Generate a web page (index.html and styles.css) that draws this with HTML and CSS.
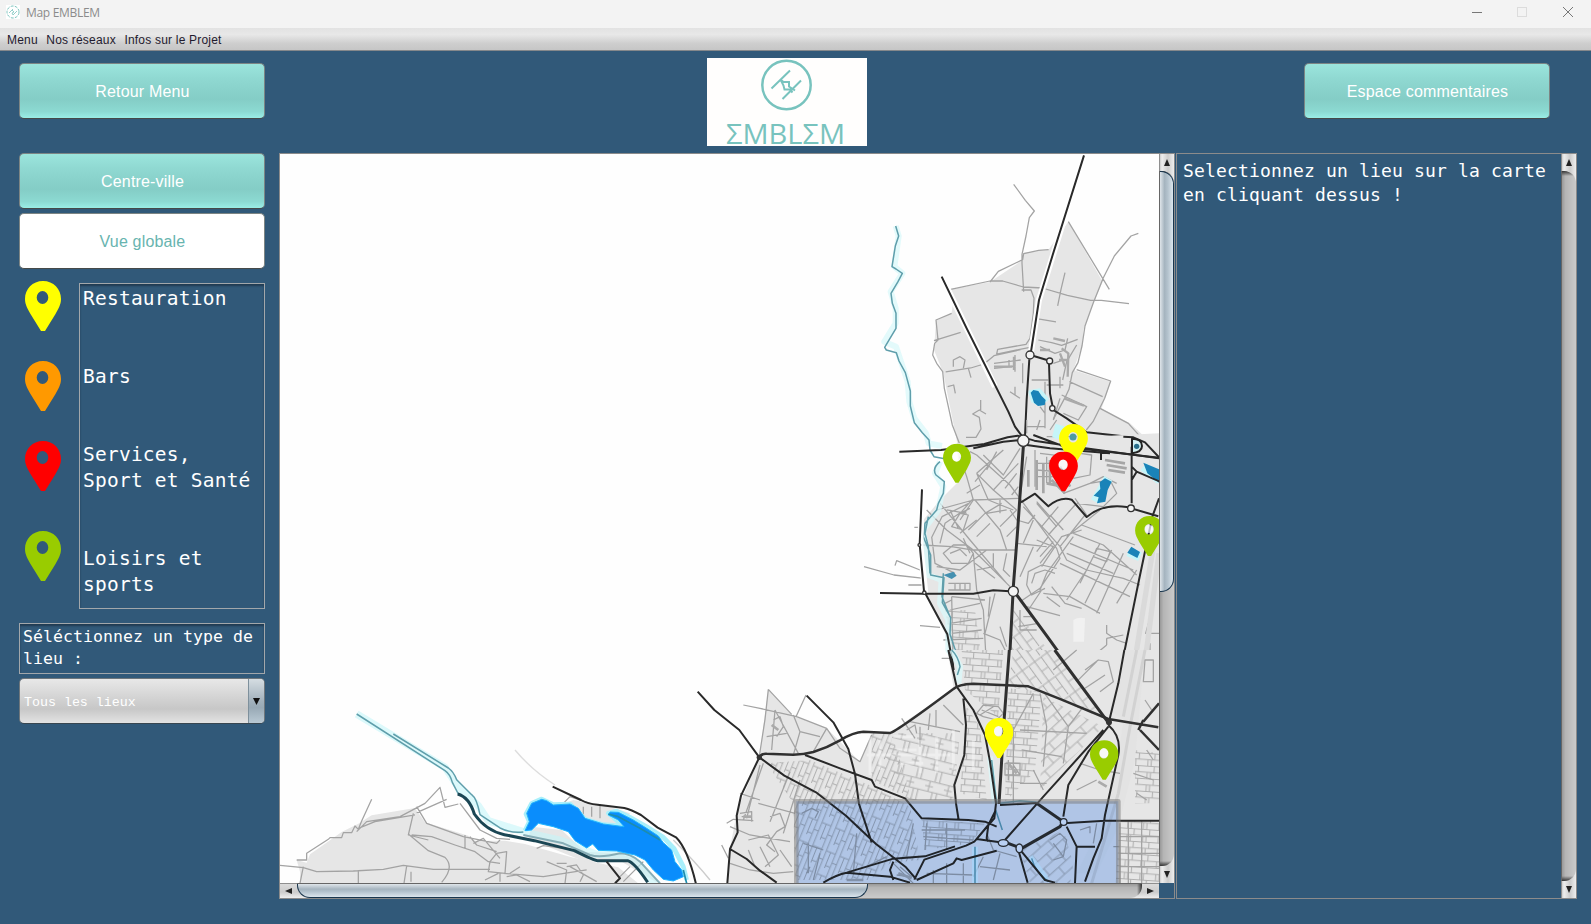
FILE: index.html
```html
<!DOCTYPE html>
<html lang="fr">
<head>
<meta charset="utf-8">
<title>Map EMBLEM</title>
<link rel="stylesheet" href="styles.css">
</head>
<body>
<svg class="defs" width="0" height="0" aria-hidden="true">
  <symbol id="pin" viewBox="0 0 36 50"><path fill-rule="evenodd" d="M18 0C7.500 0 0 8 0 18c0 6 3 10 5.500 15L16 50h4l10.500-17C33 28 36 24 36 18 36 8 28.500 0 18 0zM17.500 10a5.800 6.500 0 1 1 0 13a5.800 6.500 0 1 1 0-13z"/></symbol>
</svg>
<header class="titlebar">
  <svg class="app-icon" viewBox="0 0 14 14"><rect width="14" height="14" fill="#fff"/><circle cx="7" cy="7" r="6" fill="none" stroke="#7cc4be" stroke-dasharray="3 1.200"/><path d="M3 8l4-4M7 10l4-4M6 5l2 2-2 1 1 2" fill="none" stroke="#7cc4be" stroke-width=".8"/></svg>
  <span class="title">Map EMBLEM</span>
  <svg class="controls" width="102" height="12" viewBox="0 0 102 12" fill="none"><path d="M0 6.500h10" stroke="#777"/><rect x="45.500" y="1.500" width="9" height="9" stroke="#dcdcdc"/><path d="M91 1l10 10M101 1L91 11" stroke="#777"/></svg>
</header>
<nav class="menubar"><span>Menu</span><span>Nos réseaux</span><span>Infos sur le Projet</span></nav>
<main class="content">
  <div class="top">
    <button class="btn">Retour Menu</button>
    <svg class="logo" width="160" height="88" viewBox="0 0 160 88" role="img" aria-label="EMBLEM">
      <rect width="160" height="88" fill="#fffefd"/>
      <g fill="none" stroke="#78c3be" stroke-width="2.500"><circle cx="79.500" cy="27" r="24.200"/><path stroke-width="2" d="M64.500 30.500L83 12.500M75.500 41l18.500-18.500M73.500 21.500l3 2.500h5.500v4.500l6 4M73.500 21.500l3 6 1 4h5.500l2.500 3"/></g>
      <text x="19" y="85.500" textLength="119" lengthAdjust="spacingAndGlyphs" class="wordmark">ΣMBLΣM</text>
    </svg>
    <button class="btn">Espace commentaires</button>
  </div>
  <div class="columns">
    <aside class="side">
      <button class="btn">Centre-ville</button>
      <button class="btn selected">Vue globale</button>
      <div class="legend">
        <div class="pins">
          <svg fill="#ff0"><use href="#pin"/></svg><svg fill="#f90"><use href="#pin"/></svg><svg fill="red"><use href="#pin"/></svg><svg fill="#9c0"><use href="#pin"/></svg>
        </div>
        <pre class="legend-text">Restauration


Bars


Services,
Sport et Santé


Loisirs et
sports</pre>
      </div>
      <pre class="prompt">Séléctionnez un type de
lieu :</pre>
      <div class="combo"><span class="value">Tous les lieux</span><span class="drop"><svg width="7" height="7"><path d="M0 0h7L3.500 7z" fill="#111"/></svg></span></div>
    </aside>
    <section class="map-pane">
      <svg class="map" viewBox="280 154 879 729" fill="none" stroke-linejoin="round">
        <defs>
          <pattern id="g1" width="47" height="38" patternUnits="userSpaceOnUse" patternTransform="rotate(4)"><path d="M0 2h47M14 2v20M0 22h47M34 22v16M34 0v2M24 2v20" class="grid"/></pattern>
          <pattern id="g2" width="74" height="44" patternUnits="userSpaceOnUse" patternTransform="rotate(-68)"><path d="M0 2h74M0 17h74M0 31h50M22 2v15M50 17v27M50 0v2M8 31v13" class="grid"/></pattern>
          <pattern id="g3" width="66" height="54" patternUnits="userSpaceOnUse" patternTransform="rotate(-42)"><path d="M0 2h66M12 2v28M0 30h66M42 30v24M42 0v2" class="grid"/></pattern>
          <pattern id="g4" width="58" height="66" patternUnits="userSpaceOnUse" patternTransform="rotate(14)"><path d="M0 2h58M0 34h58M0 18h24M12 2v32M40 34v32M40 0v2M26 34v32" class="grid"/></pattern>
          <pattern id="g5" width="46" height="72" patternUnits="userSpaceOnUse" patternTransform="rotate(-36)"><path d="M0 6h46M12 0v72M36 6v66M12 42h24" class="grid"/></pattern>
        </defs>
        <rect x="280" y="154" width="879" height="729" fill="#fefefe"/>

        <!-- northern land -->
        <g transform="translate(860 150) scale(.33333)">
          <path class="land" d="M272 418L390 396 488 330 492 308 565 300 625 215 728 395 700 460 670 540 668 585 640 660 752 695 725 775 810 820 897 900V1100H330L290 870 250 670 222 600 228 512 275 490 280 450z"/>
          <path class="water-halo" d="M107 228l9 30-13 92 24 20-35 55 15 50v45l-34 55 35 15 20 60 15 45 5 60 15 50 35 45 8 30 40 8"/>
          <path class="river" d="M107 228l9 30-10 30-10 62 12 7 19 13-13 25-21 35 4 30 11 30v45l-18 30-16 27 5 8 30 8 8 25 19 35 15 55v45l12 50 24 30 20 22 3 30 12 20 40 8"/>
          <g class="st">
            <path d="M461 103l35 48 27 32-15 20-10 55-12 55v27l5 85M272 418l118-25h38l62 18 57 3 75 22 70 15h32l83 10M390 396l25-32 73-35 3-18 45-10 30-2M625 215l123 203M835 250l-22 8-50 60-33 65-30 75-25 70-9 60-12 50-17 30-10 50-12 25-35 65M615 368l-12 50-10 50M485 420h28l9 25-2 45-10 75-12 18-85 15-3 14 100-20M530 506l58 10M275 490l-47 20 6 60-10 10-6 35 12 25 18 25 5 50 12 55 12 55 25 65M222 572l80-25M257 666l75-12 40-12 30-25 80-18M650 659l102 34-18 52-35 70-20 25M628 695l100 45M720 775l85 45 70 78M318 862l30 0 15-25-5-35-20-10 20-12 20 12M362 750v30"/>
            <path d="M535 570l40 8 30 8 48-18M540 590l45 20 30-10 8-35M650 585l-30 50-12 55M580 640l30-10M402 640l80-10M402 655l65-7M447 630v20M465 615v50M488 640v60M515 690h50M560 705h50M600 680v35M465 710v25M450 725l30 20M555 695v140M500 830h55M540 770l15 20M605 735l75 35-25 40-45-20M600 745l-20 65M280 650v-20l20-10 15 10-5 25M263 710l18-5 5 25M325 655l8 28M590 810l-20 30M560 860h90M690 870h125M690 880h125"/>
          </g>
          <g stroke="#aaa" stroke-width="7"><path d="M402 650h55M605 595l20 15-2 70M600 610l15 40M580 565l35 8M612 745l60 22M462 620v40M540 600h30M597 630h25"/></g>
          <path class="halo" d="M540 762l-20-10-8-25 25-5 22 25zM600 835l-10 35M830 870v25" stroke-width="14"/>
          <path class="lake" d="M512 728l8-8 15 3 10 15 12 12-3 15-20 3-12-10z"/>
          <path class="casing" d="M672 16L537 450 513 605M245 380l160 330"/>
          <path class="road" d="M672 16L578 315 537 450 513 605M508 628l-8 120-5 110M245 380l75 155 125 250 20 45 22 30M521 618l40 12M567 640l3 90 10 50 40 25 60 42 110 12 30 2"/>
          <g class="node"><circle cx="510" cy="615" r="12"/><circle cx="569" cy="633" r="9"/><circle cx="577" cy="775" r="8"/></g>
        </g>

        <!-- centre -->
        <g transform="translate(860 420) scale(.33333)">
          <path class="land" d="M290 70l607-30V830H285l-30-190-60-120-15-110 10-110 50-60 60-60z"/>
          <path fill="url(#g1)" d="M255 570l90 0 25 180H285z"/>
          <path fill="url(#g5)" d="M460 560l70 90 90 100H450z"/>
          <g class="st">
            <path d="M330 95l20 10 100 90 140 190 10 30-60 90-60 40M350 160l80-70M350 160l50 50 75-80M350 160l35 80 75 30M300 110l20 60 20 70-40 60M230 270l110-30 140-5M240 250l90 110 110 130M200 270l60 60 80 60 110 110M185 375l90 5 60 10h130M345 240l75 90 20 60M380 280l60-10M325 330l50-50 50-30M340 400l10 110 20 60 10 180M405 520l-30 120M275 530l100 10M490 260l75 80 40 45M600 380l75-95M600 380l20 40 60 30 110 25 50 20M620 350l100-80M565 345l80-90M470 370l90 10M480 470l40-90M240 370l15-60 50-35 35-40M250 400l30-25 40 0 20 25-15 30-50 0zM270 400l30-12 20 20M230 440l70 10 80-60M216 350l30-60 80-40M215 350l10 80 60 30M260 270l60 10M270 270l25 55M300 280l30-15M275 320l25-40 25 5-15 45zM450 270l20 30 35 10 20-25M500 495l5-40 40-20 45 10M515 490l10-30 30-10 30 10M500 495l15 30 40-20M545 510l-40 60M550 520l80 10 90 50M575 500l40 50 50 15M545 440l60-90 60-20M530 360l50 20-40 50M530 395l35-45M540 410l40-45M640 350l-80 110-20 50M640 340l90 35 100 90M665 315l160 60M630 370l190 80M620 400l140 60M600 430l210 100M680 450l-60 90M720 370l-60 120M755 390l-80 160M790 400l-80 180M830 450l-60 100M700 410l10-25 40 10-10 30z"/>
            <path d="M645 235l35 50M500 110l-20 120M525 90v110M540 100l80 10M530 130h60M530 150l60 5M530 170h60M560 110v80M590 120v80M640 175l50-10 5-60-35-5M610 220l80-30 60-10 20 40-40 40-80-10M690 190l40-20 40 20M600 560l-40-30M500 560l100 27M770 660l-30-20v-25M740 655l50-10M740 655v20M740 675l-30 25-60 20M770 660l30 10M480 570v60h50M475 620l60-10M490 590h30M420 620l20 60M370 640l50 20 20 40M275 530l5 220M255 550l20-10M265 490h65v20h-65M285 490v20M300 490v20M315 490v20M12 440l90 25 90 10M180 450l-70-28-5 15M145 495h45M180 617l60 5M245 715h30M250 660l120-5M270 570l90-20M270 610l95-15M275 640l90-10M163 322h25M390 530l-5 60M700 740l20-35 20 35M500 0v40M540 0l-10 30M897 640h-40l25-90M870 720v-50M885 720l-5 30"/>
            <path d="M370 105l60 60 50-80M380 150l30-55M345 185l50-60M400 210l70 60M420 240v40M435 205l35-45M455 225l20-25M360 195l-40 25M420 320l50-50M440 350l30-30M350 350l40-40M300 340l50-40M310 355l20 45M345 430l60 45M400 400v40l-50 10M440 400l-10 50 20 20M520 300l-30 70M545 320l50-60M590 320l-60-70M570 290l-40-45M610 330l-40-45"/>
          </g>
          <g stroke="#a6a6a6" stroke-width="8"><path d="M530 120v90M550 130v90M735 120l60 10M740 135l60 10M745 150l50 8M575 180l40 40M505 150v50M560 190l50 10M570 120v70M600 140l30 60"/></g>
          <g stroke="#dadada" stroke-width="16"><path d="M897 400l-45 350M880 380l-60 370"/></g>
          <path d="M640 600q15-10 35-5l-3 70h-32z" fill="#f1f1f1"/>
          <path class="water-halo" d="M240 125l-15 35 25 40-15 70-45 60 15 135 40 15-5 70 25 50v90l35 50"/>
          <path class="river" d="M240 125q-25 20-12 40l25 20-3 35-15 30-5 20-35 40-5 40 22 55v60l40 8-5 75 25 45-2 50 20 60 12 47M205 290l-10 50 10 40 5 80M250 460l-4 70 24 60"/>
          <path d="M250 465l30-10 10 12-15 10z" fill="#4490b0"/>
          <path class="halo" d="M745 175l-40 70M600 15l-10 40M805 395l35 15M850 140l50 40" stroke-width="28"/>
          <path class="lake" d="M735 175l20 10-12 25-7 35-25 5 5-18-15-5 20-20-2-20zM850 128l47 20v40l-35-28zM802 398l12-18 26 16-8 18z"/>
          <path class="casing" d="M60 519l130 0 M186 210l-5 165 15 145"/>
          <path class="road" d="M118 95l125-5 130-18 70-20 30-5 50 15 120 18 254 35M340 85l90-20 55-5M520 45l120 45M500 75l70 10 180 15M186 208l-7 165 13 140 70 130 20 107M60 519l130 2h150l60-10 50 3M483 247l42-26 40 38q35-30 70-20l45 52q45-40 120-30l95 28M815 80v170M815 140l15 15-15 25M830 155l70 30M790 50l30 2 35 15 42 45M723 100v20M897 235l-20 55-40 190-55 270"/>
          <path class="avenue" d="M490 80l-17 250-13 170-13 250M468 522l94 128 72 100"/>
          <path class="road" d="M640 83l257 30" stroke-width="10"/>
          <path d="M816 100V56q30 0 30 22 0 18-30 22z" fill="#d4f2f4" stroke="#222" stroke-width="6"/>
          <circle cx="830" cy="79" r="8" fill="#28708c"/>
          <g class="node"><circle cx="490" cy="62" r="17"/><circle cx="460" cy="514" r="15"/><circle cx="813" cy="265" r="10"/><circle cx="178" cy="375" r="4"/><circle cx="193" cy="518" r="5"/></g>
        </g>

        <!-- southern districts -->
        <g transform="translate(680 650) scale(.33333)">
          <path class="land" d="M818 0H1437V700H145L150 595 172 480 238 322 265 118 335 195 440 235 540 335 575 250 635 250 690 205 830 115z"/>
          <path fill="url(#g4)" d="M640 250h200l-20 200-140 0-60-130z"/>
          <path fill="url(#g2)" d="M260 340l130-10 190 80 110 60 30 160-90 10-60 50H345l-5-230zM575 250l60 0 60 200-120-60z"/>
          <path fill="url(#g1)" d="M845 0h125l-15 200-100-80zM860 170l40 60 20 220-80-20zM725 510l190 10-40 60-140 20z"/>
          <path fill="url(#g5)" d="M1000 0h120l160 210-190-80-105-20z"/>
          <path fill="url(#g1)" d="M985 115l100 10-20 240-90 90zM1320 510h117v190h-130zM1365 300l72 10v150h-72z"/>
          <path fill="url(#g3)" d="M1020 600l130-60 30 100-10 60h-120zM1090 140l180 90-190 190z"/>
          <path d="M1335 0h60l-30 330-50 200-65 140h-60l90-180 30-130 20-150-40-30z" fill="#e3e3e3"/>
          <path d="M1395 0l-45 230-35 200-80 270M1370 0l-40 200" stroke="#d2d2d2" stroke-width="9"/>
          <g class="st">
            <path d="M190 165l50 10 110 25 90 35 40 60 60 40 35-80M265 118l70 75M378 135l-30 65M265 118l-10 90-17 110M285 180l-10 120M280 210l20-10 10 30-20 30M285 180l70 130M260 260l60-10M340 195l20 50-20 70M360 245l60 15M440 235l-40 70M665 205l40 60M680 240l25-15 5 25M720 230v60M750 190l-5 50M768 180v50M790 165l60 60M690 215l150 30M240 345l-40 160M180 430l60 20M180 490l35-5v30M185 500h30M140 520l20-12 60 4M150 530l60 25 120 20M150 640l60 20 70 10 60-5M250 340l-60 170M330 365l-60 150M360 390l-50 160M235 460l110 30M270 500l30-10 15 40-25 15-30 40 25 20M205 570l60-15 30 60-40 35M205 600l20 50M240 590l30 60M300 600l35 50M145 625l-20-40M890 190l20-25 45 5 15 20-20 20-40-10zM905 180l50 20M900 195l40-25"/>
            <path d="M1215 60l40-30 30 5 15 60-40 30M1120 60l70-60M1190 95l60-60M1215 115l60-40M1090 125l75 105M1165 230l45-60M1165 230l-15 110M1080 130l20 100-10 120M1020 240l200 10M1060 130l-60 110M1000 230v230M1025 300l120 20M975 340h45v35h-45zM985 330v60M1000 345l20 30M1060 360l30 60M1020 400h80M1200 340l60 20 60 10M1190 420l60-30M1420 30h-25l-5 65h30zM1395 150l20 30M1360 370l60 20M1370 430l30 20M1400 300l20 30"/>
            <path d="M365 490l30-15 20 10-10 20M385 580v90M390 650l-10 20M370 580l60 20M420 610l-20 80M530 550l-10 120M560 650l60-30M640 640l60 60M660 650l35 30M650 675l40 5M700 520l-20 100M740 520l-5 80M800 520v80M730 560l150 10M725 540h130M920 550l20 50 70 20M910 620l-30 60M960 610l-20 80M760 660v40M800 640v60M850 640v60M740 670l140 5M900 650l90 10M1110 570l30-20 20 20-10 50-30 10M1120 580l30 40M1200 540l30-10v20M1250 520l-10 60M1320 520v180M1345 510v190M1385 510v190M1320 560h117M1320 610h117M1320 650h117M1300 590h20"/>
          </g>
          <g stroke="#aaa" stroke-width="8"><path d="M190 500h25M985 340l25 30M1255 395l25 15M275 225l20 15M500 690h50M655 670l40 15"/></g>
          <path class="water-halo" d="M815 0l25 50-5 50M930 320l15 140M885 590v110M1050 620l50 70"/>
          <path class="river" d="M815 0q20 20 25 50l-8 25M935 330l15 130M947 480l20 60M885 590v110M1055 625q10 40 50 70M960 460l60-8 50 5"/>
          <g stroke="#fff" stroke-opacity=".35" stroke-width="9"><path d="M570 260v115M600 270v90M640 260h60M650 300h60M660 340h70M720 270v100M770 260v110M820 240v120M880 270v90M560 315h250"/></g>
          <path class="road" d="M53 125l50 55 75 60 60 82 75 55 95 50 90 70 90 85 90 70 30 35M380 137l80 80 45 80 20 75 12 90 38 115M238 322l-55 115-13 60 3 50-23 50-8 103M150 597l50 30 40 35 50 36M375 315l105 40 95 35 10 20 90 35 50 60 140 5 50 5 35 15M805 0l25 110 50 70 35 75 15 80 18 125-5 45-60 70-25 12-125 42-30 60M850 145l8 80-5 90-30 90 5 55 8 50M430 698q40-25 70-30l140-42 95-7 90-30M640 635l-10 25 10 30M710 690l110-50 10-15 15 5 105-28M500 668l130 12 60 18M1333 0l-18 100-28 115M1285 230l-60 75-60 100-15 95M1285 225q40 35 30 90l-40 180-10 70-25 60-25 70M1270 240l-180 200-115 130M1150 520l125-8h162M1160 530l30 60-5 110M1190 590h55M1015 600l28 98M1025 605l70 85 30 8M925 525l-5 40 5 10M945 485l-20 40-35 42 70 10M960 465l110-6"/>
          <path class="avenue narrow" d="M238 320q10-10 22-9l80 3q30 0 60-8 40-12 80-35 40-25 70-26l80 4q20-5 190-132 15-14 60-16l165 8 100 40 140 58 150 25M1390 215l47-55M1375 240l15-30M1380 240l57 60"/>
          <path class="avenue" d="M988 0l-15 200-16 262M1124 0l161 218M1070 460l80 55-10 15-115 65-60-22"/>
          <circle cx="1287" cy="217" r="9" fill="#333"/><circle cx="238" cy="322" r="8" fill="#333"/>
          <g class="node"><circle cx="1151" cy="516" r="10"/><ellipse cx="970" cy="579" rx="15" ry="10"/><ellipse cx="1018" cy="595" rx="10" ry="13"/></g>
          <path class="zone" d="M349 700V454h966v246z"/>
          <path d="M349 700V454h966v246" stroke="#787878" stroke-opacity=".5" stroke-width="14"/>
        </g>

        <!-- south-west canal and lake -->
        <g transform="translate(270 680) scale(.33333)">
          <path class="land" d="M90 615v-40l-10-35 30 8 10-25 60-42 35-25 50-25 40-25 130-22 30 43 130 40 20 15h90l60 10 140 40 140 30 60 48z"/>
          <path class="land" d="M785 440l90 10 70 65 100 5 60 20 60 70-110-65-110 0-100-40-70-30zM870 375l40-15 110 20 60 20-20 40-120-20z"/>
          <g class="st">
            <path d="M30 556l70 7 40 12 110-2 90-5 60-12 90 12h170M100 560l-10 50M265 570v40M410 558l-8 52M423 575v30M80 540h30v-20l65-42 5-5h35l5-15h25l10-20 10 10 10-25 30-65M260 455l30-30 100-15 75-40 45-48 15 60 40-10M265 445l50-20 120-20M430 400l-15 65 60 15M415 462l60 50 50 20q30 30-10 75M440 380l30 50 110 40 100 20 10-10M425 465l60 5 70 25 60 20 40 30 35 5M440 398l90-40M585 465v40M600 470l20 25 60 20M610 490l30-15 50 60M660 545l-5 30 50 5 5-65-30 5zM700 580l120 10 130-20M690 580v25M710 590l30-5 40 20M830 545l60 25-5 40M890 560l30-5 20 30-10 20M900 560l80 45M860 550h30M1050 590l30-30M1060 605l60-60M940 380v30M965 380v30M990 375v40M880 370l20-20 60 20M570 370l60 80 50 25 40 3M800 505l20-8 110 15M645 600l40-20M750 560l-30 20"/>
          </g>
          <path d="M735 210q50 60 120 105" stroke="#ddd" stroke-width="4"/>
          <path d="M1210 480q70 70 110 120" stroke="#ccc" stroke-width="4"/>
          <path class="halo" stroke-width="22" stroke-opacity=".6" d="M260 102l265 160 40 60 60 55 30 45 110 35 110 25 100 40 100 5 80 85"/>
          <path class="river" d="M260 102l265 170q15 10 22 35l18 35M370 162l165 102q15 10 25 35l45 45q15 10 25 60l60 40q30 16 70 12"/>
          <path stroke="#86adb6" stroke-width="6" d="M760 465l120 25 80 35q30 10 90-5 30 0 60 25l60 65"/>
          <path stroke="#1b4654" stroke-width="9" d="M563 342q35 10 50 60 35 50 90 62l90 18 120 30q60 30 70 30l90 0q20 5 60 65"/>
          <path d="M765 452L778 425 768 402 785 370 815 357 850 374 900 372 925 395 945 418 1000 434 1060 438 1015 400 1040 393 1080 412 1130 440 1180 472 1212 505 1240 560 1250 600" stroke="#a9effa" stroke-width="14"/>
          <path class="lake big" d="M765 452L778 425 770 400 785 370 815 358 830 362 850 375 900 372 925 385 945 415 1000 432 1062 440 1045 420 1015 405 1020 396 1045 397 1090 420 1130 445 1165 468 1180 488 1205 510 1215 545 1235 570 1240 590 1210 603 1180 598 1150 570 1125 540 1095 525 1040 513 985 511 968 492 950 504 915 482 895 455 850 440 805 430 785 450z"/>
          <path d="M1015 402l30 8 65 35 60 35M1240 570l10 40" stroke="#1c8cae" stroke-width="5"/>
          <path class="road" d="M848 320l85 40q20 12 50 14l80 10q20 5 50 21l50 38 55 29q35 35 60 140M1010 545l40 50-15 15" stroke-width="8"/>
        </g>

        <g>
          <g fill="#fff" fill-opacity=".7"><circle cx="957" cy="456" r="5"/><circle cx="1149" cy="529" r="4"/><circle cx="1063" cy="464" r="5"/><circle cx="998" cy="731" r="5"/><circle cx="1104" cy="753" r="5"/></g>
          <circle cx="1073" cy="437" r="3.500" fill="#4f9aa0"/>
          <use href="#pin" x="943" y="443.500" width="28" height="39.500" fill="#9c0"/>
          <use href="#pin" x="1059" y="424" width="29" height="40" fill="#ff0"/>
          <use href="#pin" x="1049" y="451.500" width="29" height="40" fill="red"/>
          <use href="#pin" x="1135" y="516" width="29" height="40" fill="#9c0"/>
          <use href="#pin" x="984.500" y="718" width="29" height="40" fill="#ff0"/>
          <use href="#pin" x="1090" y="740" width="28.500" height="40" fill="#9c0"/>
        </g>
      </svg>
      <div class="vbar"><span class="arrow up"></span><div class="track"><div class="thumb map-v"></div></div><span class="arrow down"></span></div>
      <div class="hbar"><span class="arrow left"></span><div class="track"><div class="thumb map-h"></div></div><span class="arrow right"></span></div>
    </section>
    <section class="info-pane">
      <pre class="info">Selectionnez un lieu sur la carte
en cliquant dessus !</pre>
      <div class="vbar"><span class="arrow up"></span><div class="track"></div><span class="arrow down"></span></div>
    </section>
  </div>
</main>
</body>
</html>
```
FILE: styles.css
```css
* { box-sizing: border-box; }
body { margin: 0; height: 924px; overflow: hidden; background: #315979; display: flex; flex-direction: column; font-family: "Liberation Sans", Arial, sans-serif; }
pre { margin: 0; font-family: "DejaVu Sans Mono", monospace; color: #fff; }
.defs { display: none; }

.titlebar { height: 28px; background: #f3f3f3; display: flex; align-items: center; padding: 0 17px 4px 6px; flex: none; }
.app-icon { width: 14px; height: 14px; }
.title { font: 12px/16px "Open Sans", "Noto Sans", sans-serif; letter-spacing: -.3px; color: #8b8b8b; margin-left: 6px; padding-top: 2px; }
.controls { margin-left: auto; }
.menubar { height: 23px; flex: none; display: flex; gap: 8.500px; padding: 1px 7px 0; background: linear-gradient(#e2e2e2, #e8e8e8 30%, #cecece 70%, #c6c6c6); border-bottom: 1px solid #85888b; font-size: 12px; line-height: 23px; letter-spacing: .2px; color: #1f1a2e; }

.content { flex: 1; padding: 0 14px 0 19px; }
.top { height: 102px; display: flex; justify-content: space-between; align-items: flex-start; padding: 7px 27px 0 0; }
.top .btn { margin-top: 5px; }
.logo { margin-left: 4px; overflow: visible; }
.wordmark { font: 28px "Open Sans", sans-serif; fill: #78c3be; }
.btn { width: 246px; height: 56px; flex: none; display: block; border: 1px solid #7d8584; border-bottom-color: #464a49; border-radius: 5px; padding: 2px 0 0 1px; background: linear-gradient(#9be5dd, #8fd8d1 28%, #84cdc6 65%, #8cdad2 88%, #9aeee6); color: #fff; font: 16px "Liberation Sans", Arial, sans-serif; letter-spacing: .17px; }
.btn.selected { background: #fff; color: #68b4af; }

.columns { display: grid; grid-template-columns: 260px 896px 1px 401px; }
.side { width: 246px; display: flex; flex-direction: column; }
.side .selected { margin-top: 4px; }
.legend { display: flex; justify-content: space-between; margin-top: 12px; height: 328px; }
.pins { padding-left: 6px; display: flex; flex-direction: column; gap: 30px; }
.pins svg { width: 36px; height: 50px; }
.pins svg:last-child { margin-top: 10px; }
.legend-text { margin-top: 2px; width: 186px; height: 326px; border: 1px solid #a2a7ab; box-shadow: inset 0 2px 2px #203b52; padding: 2px 3px; font-size: 19.500px; line-height: 26px; letter-spacing: .23px; }
.prompt { margin-top: 14px; height: 51px; border: 1px solid #a2a7ab; box-shadow: inset 0 2px 2px #203b52; padding: 2px 3px; font-size: 16.500px; line-height: 22px; letter-spacing: .07px; }
.combo { margin-top: 4px; height: 46px; display: flex; border: 1px solid #6f777c; border-bottom-color: #384650; border-radius: 5px; overflow: hidden; background: linear-gradient(#e8e8e8, #d2d2d2 45%, #c7c7c7 68%, #e3e3e3); }
.value { flex: 1; padding: 4px 0 0 4px; font: 13.300px/40px "Liberation Mono", "Courier New", monospace; color: #fff; }
.drop { width: 16px; border-left: 1px solid #7e909c; display: flex; align-items: center; justify-content: center; background: linear-gradient(#d5dde2, #a2b1bc 50%, #98a9b5 65%, #b9c9d4); }

.map-pane { border: 1px solid #8b8b8b; height: 746px; display: grid; grid-template: 729px 15px / 879px 15px; }
.map { width: 879px; height: 729px; display: block; isolation: isolate; }
.info-pane { grid-column: 4; border: 1px solid #8b8b8b; height: 746px; display: flex; justify-content: space-between; }
.info { padding: 5px 0 0 6px; font-size: 18px; line-height: 24px; letter-spacing: .16px; }

.vbar { width: 15px; display: flex; flex-direction: column; background: linear-gradient(90deg, #bbb, #eee 20%, #ccc 60%, #eee); }
.hbar { height: 15px; display: flex; background: linear-gradient(#ddd, #ccc 60%, #eee); }
.track { flex: 1; }
.vbar .track { border-left: 1px solid #666; background: linear-gradient(#333, transparent 5px calc(100% - 5px), #333), linear-gradient(90deg, #999, #b5b5b5 25%, #cacaca); border-radius: 0 12px 12px 0; }
.hbar .track { border-top: 1px solid #666; background: linear-gradient(90deg, transparent calc(100% - 5px), #333), linear-gradient(#999, #b5b5b5 25%, #cacaca); border-radius: 0 0 12px 12px; }
.arrow { flex: none; display: flex; align-items: center; justify-content: center; }
.vbar .arrow { height: 17px; border-left: 1px solid #8f8f8f; }
.hbar .arrow { width: 17px; border-top: 1px solid #8f8f8f; }
.arrow::before { content: ""; border: 3.500px solid transparent; }
.up::before { border-bottom: 7px solid #222; border-top: 0; }
.down::before { border-top: 7px solid #222; border-bottom: 0; }
.left::before { border-right: 7px solid #222; border-left: 0; }
.right::before { border-left: 7px solid #222; border-right: 0; }
.map-v { height: 421px; border: 1px solid #19364e; border-left: 0; border-radius: 0 13px 13px 0; background: linear-gradient(90deg, #dfe5ea, #a5b4bf 35%, #b4c3ce 60%, #dbe5ec); }
.map-h { width: 571px; height: 14px; border: 1px solid #19364e; border-top: 0; border-radius: 0 0 13px 13px; background: linear-gradient(#dfe5ea, #a5b4bf 40%, #b4c3ce 60%, #dbe5ec); }

.land { fill: #e6e6e6; }
.grid { stroke: #b0b0b0; stroke-width: 3.200; fill: none; }
.st { stroke: #a3a3a3; stroke-width: 3.800; }
.road { stroke: #292929; stroke-width: 6; }
.avenue { stroke: #303030; stroke-width: 9; }
.avenue.narrow { stroke-width: 7.500; }
.casing { stroke: #fff; stroke-width: 18; }
.river { stroke: #5f9eab; stroke-width: 4.500; }
.water-halo { stroke: #d9f8f9; stroke-width: 18; stroke-opacity: .75; }
.halo { stroke: #c5f5f9; }
.lake { fill: #1a83b8; }
.lake.big { fill: #0a8dfc; stroke: #20b5ff; stroke-width: 3; }
.zone { fill: #c3dbff; mix-blend-mode: multiply; }
.node circle, .node ellipse { fill: #f4f4f4; stroke: #333; stroke-width: 4; }
```
